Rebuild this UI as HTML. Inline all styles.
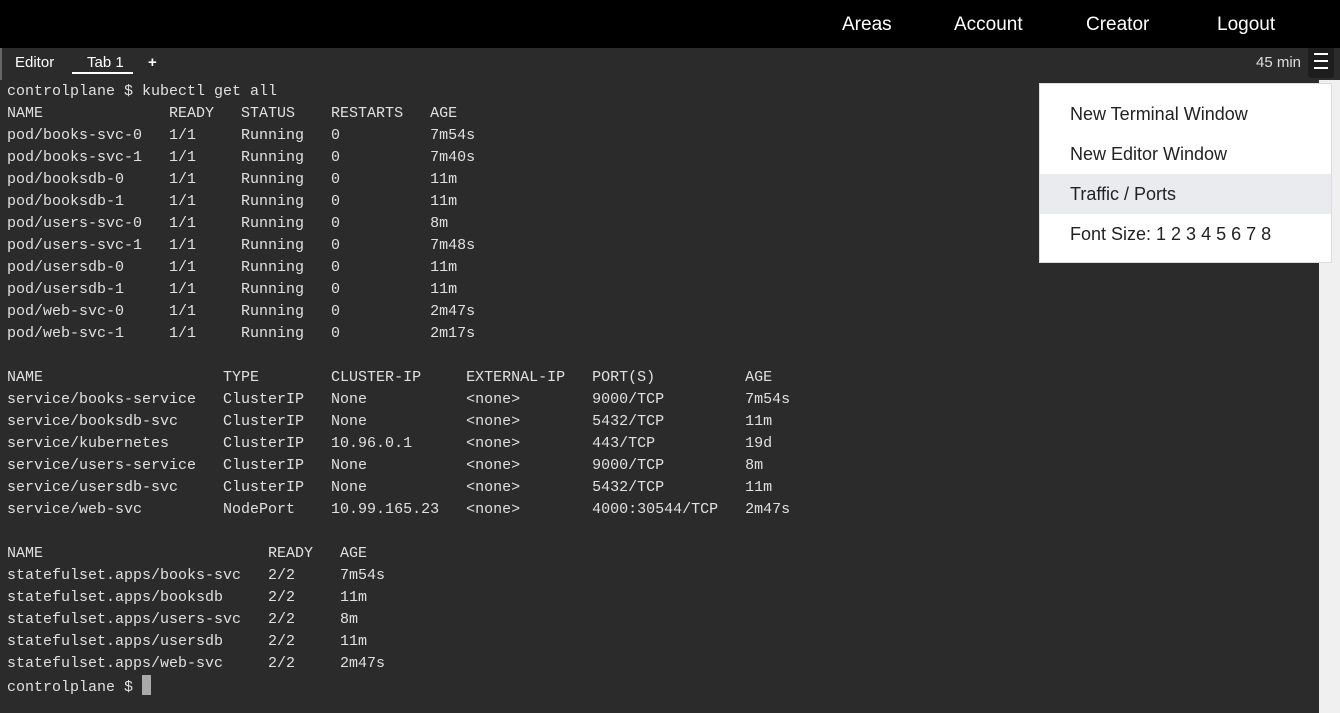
<!DOCTYPE html>
<html><head><style>
*{margin:0;padding:0;box-sizing:border-box}
body{width:1340px;height:713px;overflow:hidden;background:#2b2b2b;position:relative;font-family:"Liberation Sans",sans-serif}
.top{position:absolute;left:0;top:0;width:1340px;height:48px;background:#000}
.top span{position:absolute;top:14px;color:#fff;font-size:19px}
.tabs{position:absolute;left:0;top:48px;width:1340px;height:32px;background:#2b2b2b;border-left:2px solid #666}
.tabs span{position:absolute;color:#fff;font-size:15px;top:6px}
.ul{position:absolute;left:72px;top:72px;width:61px;height:2px;background:#fff}
.right{position:absolute;left:1319px;top:80px;width:21px;height:633px;background:#f0f0f0}
.hb{position:absolute;left:1308px;top:48px;width:26px;height:30px;background:#1d1d1d;border-radius:0 0 4px 4px}
.hb i{position:absolute;left:6px;width:14px;height:2px;background:#fff}
pre{position:absolute;left:7px;top:81px;font-family:"Liberation Mono",monospace;font-size:15px;line-height:22px;color:#e0e0e0}
.cur{display:inline-block;width:9px;height:20px;background:#aaa;vertical-align:-4px}
.menu{position:absolute;left:1039px;top:83px;width:293px;height:180px;background:#fff;border:1px solid #ddd}
.menu div{height:40px;line-height:40px;padding-left:30px;font-size:18px;color:#222}
</style></head><body>
<div class="top">
<span style="left:842px">Areas</span><span style="left:954px">Account</span><span style="left:1086px">Creator</span><span style="left:1217px">Logout</span>
</div>
<div class="tabs">
<span style="left:13px">Editor</span><span style="left:85px">Tab 1</span><span style="left:146px;font-weight:bold">+</span>
<span style="left:1254px;color:#ddd;font-size:15px">45 min</span>
</div>
<div class="ul"></div>
<div class="right"></div>
<div class="hb"><i style="top:5px"></i><i style="top:12px"></i><i style="top:19px"></i></div>
<pre>controlplane $ kubectl get all
NAME              READY   STATUS    RESTARTS   AGE
pod/books-svc-0   1/1     Running   0          7m54s
pod/books-svc-1   1/1     Running   0          7m40s
pod/booksdb-0     1/1     Running   0          11m
pod/booksdb-1     1/1     Running   0          11m
pod/users-svc-0   1/1     Running   0          8m
pod/users-svc-1   1/1     Running   0          7m48s
pod/usersdb-0     1/1     Running   0          11m
pod/usersdb-1     1/1     Running   0          11m
pod/web-svc-0     1/1     Running   0          2m47s
pod/web-svc-1     1/1     Running   0          2m17s

NAME                    TYPE        CLUSTER-IP     EXTERNAL-IP   PORT(S)          AGE
service/books-service   ClusterIP   None           &lt;none&gt;        9000/TCP         7m54s
service/booksdb-svc     ClusterIP   None           &lt;none&gt;        5432/TCP         11m
service/kubernetes      ClusterIP   10.96.0.1      &lt;none&gt;        443/TCP          19d
service/users-service   ClusterIP   None           &lt;none&gt;        9000/TCP         8m
service/usersdb-svc     ClusterIP   None           &lt;none&gt;        5432/TCP         11m
service/web-svc         NodePort    10.99.165.23   &lt;none&gt;        4000:30544/TCP   2m47s

NAME                         READY   AGE
statefulset.apps/books-svc   2/2     7m54s
statefulset.apps/booksdb     2/2     11m
statefulset.apps/users-svc   2/2     8m
statefulset.apps/usersdb     2/2     11m
statefulset.apps/web-svc     2/2     2m47s
controlplane $ <span class="cur"></span></pre>
<div class="menu">
<div style="margin-top:10px">New Terminal Window</div>
<div>New Editor Window</div>
<div style="background:#e9ebee">Traffic / Ports</div>
<div>Font Size: 1 2 3 4 5 6 7 8</div>
</div>
</body></html>
